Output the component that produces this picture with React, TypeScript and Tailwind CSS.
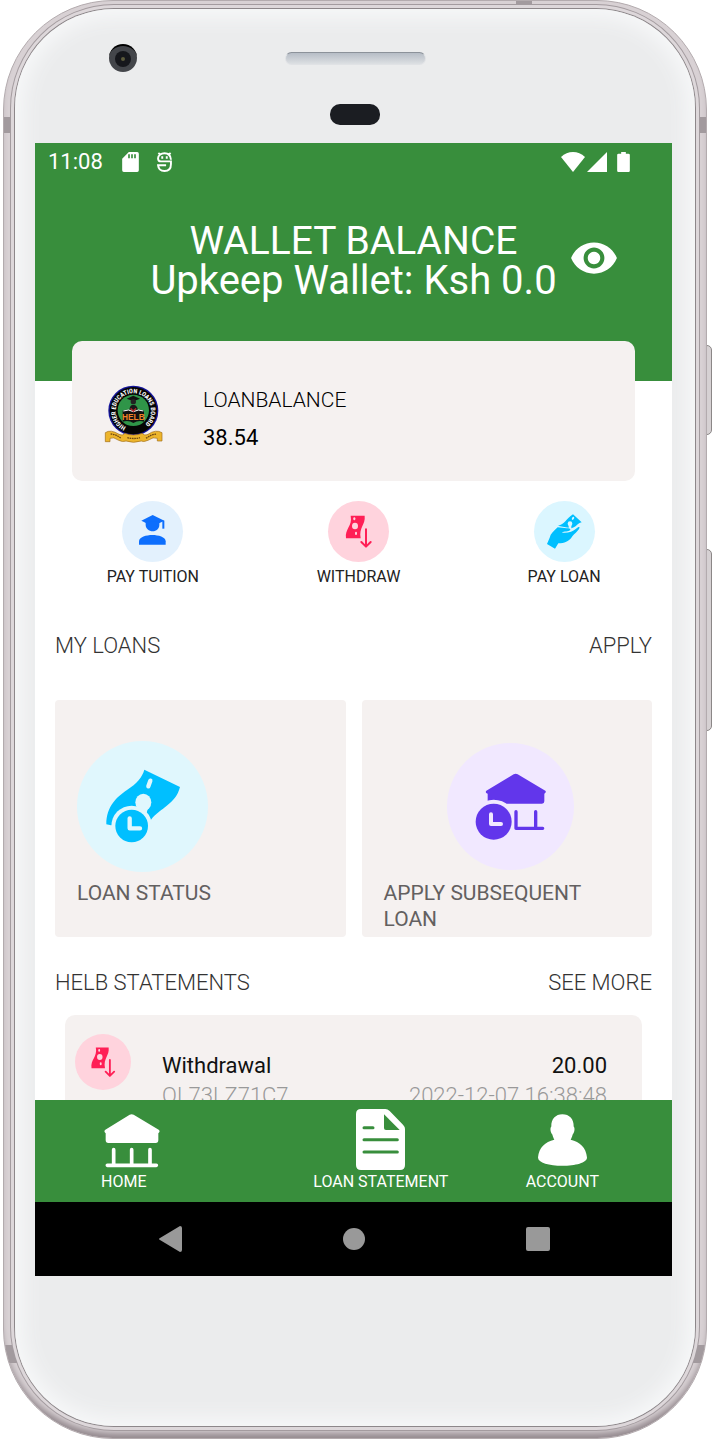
import type { ReactNode } from 'react';
import { MdVisibility } from 'react-icons/md';

function StatusBar() {
  return (
    <div className="flex h-[38px] items-center justify-between pr-[42px] pl-[13px] text-[22px] leading-6">
      <div className="flex items-center">
        <span>11:08</span>
        <svg className="ml-[19px] h-5 w-[17px]" viewBox="0 0 50 60" fill="currentColor">
          <path
            fillRule="evenodd"
            d="M20 0H45Q50 0 50 5V55Q50 60 45 60H5Q0 60 0 55V20ZM18 7V19H23V7ZM27 7V19H32V7ZM36 7V19H41V7Z"
          />
        </svg>
        <svg
          className="ml-[18px] h-5 w-[15px]"
          viewBox="0 0 46 62"
          fill="none"
          stroke="currentColor"
          strokeWidth="6"
        >
          <path d="M4 3L11 9M42 3L35 9M43 24C42 10 34 4 23 4S3 11 3 19Q3 29 12 29H43V37C43 52 34 59 23 59S4 52 3 41H28" />
          <path d="M16 13V21M30 13V21" />
        </svg>
      </div>
      <div className="flex items-center">
        <svg className="h-5 w-6" viewBox="0 0 72 60" fill="currentColor">
          <path d="M36 60L0 15Q16 0 36 0T72 15Z" />
        </svg>
        <svg className="ml-[2px] h-5 w-5" viewBox="0 0 60 60" fill="currentColor">
          <path d="M60 0V60H0Z" />
        </svg>
        <svg className="ml-[10px] h-5 w-[13px]" viewBox="0 0 38 60" fill="currentColor">
          <path d="M12 0H26V5H34Q38 5 38 9V56Q38 60 34 60H4Q0 60 0 56V9Q0 5 4 5H12Z" />
        </svg>
      </div>
    </div>
  );
}

function HelbLogo() {
  return (
    <svg className="mt-2 h-[60px] w-[59px]" viewBox="0 0 177 180" role="img" aria-label="HELB">
      <defs>
        <path id="ring" d="M66 126A53 53 0 1 1 110 126" />
      </defs>
      <circle cx="88" cy="77" r="75" fill="#14149a" />
      <circle cx="88" cy="77" r="71" fill="#050505" />
      <circle cx="88" cy="76" r="47" fill="#2f9548" />
      <text
        fill="#ffffff"
        fontSize="19"
        fontWeight="700"
        fontFamily="'Liberation Sans Narrow', 'Roboto Condensed', 'Liberation Sans', sans-serif"
      >
        <textPath href="#ring">HIGHER EDUCATION LOANS BOARD</textPath>
      </text>
      <path d="M68 41L88 32L108 41L88 49Z" fill="#111" />
      <circle cx="88" cy="50" r="8" fill="#222" />
      <path d="M76 74Q78 58 88 60Q98 58 102 74Z" fill="#181818" />
      <path d="M56 77Q74 70 88 79Q104 70 120 77V110Q104 104 88 114Q74 104 56 110Z" fill="#111" />
      <path d="M58 78Q74 71 88 80Q104 71 118 78" fill="none" stroke="#fff" strokeWidth="3" />
      <path d="M80 70L88 79L96 70" fill="none" stroke="#c8232c" strokeWidth="4" />
      <text
        x="88"
        y="106"
        fill="#f0832a"
        fontSize="25"
        fontWeight="700"
        textAnchor="middle"
        fontFamily="'Liberation Sans', sans-serif"
      >
        HELB
      </text>
      <path
        d="M4 143Q20 132 45 148Q58 153 62 145Q88 155 115 145Q120 153 132 148Q155 132 174 143V168H160V160Q148 154 132 166Q118 172 112 168Q88 176 66 168Q56 172 44 166Q28 154 18 160V170H4Z"
        fill="#edb52c"
        stroke="#a06c18"
        strokeWidth="2"
      />
      <path
        d="M20 147Q36 148 52 160M70 158Q88 163 108 158M126 160Q142 148 158 147"
        fill="none"
        stroke="#6e4812"
        strokeWidth="4"
        strokeDasharray="5 2"
      />
    </svg>
  );
}

function TuitionIcon() {
  return (
    <svg className="h-full w-full" viewBox="0 0 183 183" fill="#0d6efd">
      <path d="M58 59L92 42L127 59L92 76Z" />
      <path d="M71 62V72C71 83 81 91 92 91S112 83 112 72V62Z" />
      <path d="M121 59H127V83H121Z" />
      <path d="M51 131V121C51 108 73 102 91 102S131 108 131 121V131Z" />
    </svg>
  );
}

function WithdrawIcon() {
  return (
    <svg className="h-full w-full" viewBox="0 0 183 183">
      <path d="M68 44H110C113 72 92 78 98 112H54C50 82 74 76 68 44Z" fill="#ff1f56" />
      <g fill="#ffd3dd">
        <ellipse cx="81" cy="75" rx="9" ry="10" />
        <rect x="76" y="49" width="6" height="9" rx="3" />
        <rect x="81" y="92" width="6" height="10" rx="3" />
      </g>
      <path
        d="M114 85V136M100 123L114 137L128 123"
        fill="none"
        stroke="#ff1f56"
        strokeWidth="6"
        strokeLinecap="round"
        strokeLinejoin="round"
      />
    </svg>
  );
}

function PayLoanIcon() {
  return (
    <svg className="h-full w-full" viewBox="0 0 183 183">
      <path d="M72 74C92 70 96 54 117 40L143 64C128 68 130 77 112 82L78 76Z" fill="#00bfff" />
      <g fill="#dbf6ff">
        <circle cx="108" cy="68" r="7" />
        <rect x="104" y="72" width="8" height="14" />
        <ellipse cx="117" cy="52" rx="3" ry="5" transform="rotate(30 117 52)" />
      </g>
      <path
        d="M39 129L63 143L73 127C92 127 104 120 112 110C118 101 132 91 136 82C138 76 133 78 128 82C116 93 100 97 83 95C90 90 104 93 109 87C110 83 104 82 98 82L71 79C58 91 50 98 47 110Z"
        fill="#00bfff"
      />
    </svg>
  );
}

function LoanStatusIcon() {
  return (
    <svg className="h-full w-full" viewBox="0 0 393 393">
      <path
        d="M202 86L309 138C296 190 250 200 222 236L164 255L102 253L88 250C88 195 120 168 150 147C180 127 196 108 202 86Z"
        fill="#00bfff"
      />
      <g fill="#e0f7fd">
        <circle cx="164" cy="255" r="61" />
        <ellipse cx="199" cy="184" rx="24" ry="26" />
        <path d="M182 198H214L208 218H185Z" />
      </g>
      <circle cx="164" cy="255" r="49" fill="#00bfff" />
      <path
        d="M220 119L214 136M158 232V262H189"
        fill="none"
        stroke="#e0f7fd"
        strokeWidth="13"
        strokeLinecap="round"
        strokeLinejoin="round"
      />
    </svg>
  );
}

function ApplyLoanIcon() {
  return (
    <svg className="h-full w-full" viewBox="0 0 381 381">
      <path
        d="M200 94Q206 91 212 94L295 143Q299 148 292 152V175Q292 182 285 182H122V152Q113 149 118 143Z"
        fill="#6236eb"
      />
      <circle cx="140" cy="236" r="66" fill="#f1e8ff" />
      <path
        d="M207 206V256M266 206V256M207 256H287"
        fill="none"
        stroke="#6236eb"
        strokeWidth="10"
        strokeLinecap="round"
      />
      <circle cx="140" cy="236" r="54" fill="#6236eb" />
      <path
        d="M132 214V243H162"
        fill="none"
        stroke="#f1e8ff"
        strokeWidth="12"
        strokeLinecap="round"
        strokeLinejoin="round"
      />
    </svg>
  );
}

function HomeIcon() {
  return (
    <svg className="ml-[3px] h-[54px] w-14" viewBox="0 0 168 162" fill="currentColor">
      <path d="M77 2Q83 -1 89 2L164 47Q170 52 163 58V78Q163 87 155 87H13Q5 87 5 78V58Q-2 52 4 47Z" />
      <path
        d="M29 107V152M83 107V152M138 107V152M10 154H157"
        stroke="currentColor"
        strokeWidth="11"
        strokeLinecap="round"
      />
    </svg>
  );
}

function DocumentIcon() {
  return (
    <svg className="h-[61px] w-[49px]" viewBox="0 0 147 183">
      <path
        d="M15 0H88Q95 0 101 6L141 47Q147 53 147 60V168Q147 183 132 183H15Q0 183 0 168V15Q0 0 15 0Z"
        fill="#fff"
      />
      <path d="M84 16L131 63H90Q84 63 84 57Z" fill="#388e3c" />
      <path
        d="M24 56H51M24 92H124M24 129H124"
        stroke="#388e3c"
        strokeWidth="9"
        strokeLinecap="round"
      />
    </svg>
  );
}

function AccountIcon() {
  return (
    <svg className="h-[52px] w-[49px]" viewBox="0 0 147 155" fill="currentColor">
      <path d="M73 0C94 0 108 14 107 37C112 43 109 56 104 61C102 68 100 73 98 77C126 83 144 101 147 130C147 146 112 155 73 155S0 146 0 130C3 101 21 83 49 77C47 73 45 68 43 61C38 56 35 43 40 37C39 14 53 0 73 0Z" />
    </svg>
  );
}

function Header() {
  return (
    <header className="h-[238px] shrink-0 bg-[#388e3c] text-white">
      <StatusBar />
      <div className="mt-10 grid grid-cols-[1fr_auto_1fr] items-start gap-3">
        <div className="col-start-2 text-center text-[40px] leading-10 whitespace-nowrap">
          <h1 className="text-[39px]">WALLET BALANCE</h1>
          <p>Upkeep Wallet: Ksh 0.0</p>
        </div>
        <button type="button" aria-label="Show balance" className="w-fit pt-3">
          <MdVisibility className="h-[50px] w-[50px]" />
        </button>
      </div>
    </header>
  );
}

function BalanceCard() {
  return (
    <section className="relative mx-[37px] -mt-10 flex h-[140px] shrink-0 items-center gap-10 rounded-[10px] bg-[#f5f1f0] px-8">
      <HelbLogo />
      <div className="mt-4 leading-6 text-black">
        <h2 className="text-[21px] font-light">LOANBALANCE</h2>
        <p className="mt-[14px] text-[22px]">38.54</p>
      </div>
    </section>
  );
}

function QuickAction({
  label,
  color,
  children,
}: {
  label: string;
  color: string;
  children: ReactNode;
}) {
  return (
    <button
      type="button"
      className="flex flex-col items-center gap-1 text-base leading-[22px] text-[#222]"
    >
      <span className={`block h-[61px] w-[61px] rounded-full ${color}`}>{children}</span>
      {label}
    </button>
  );
}

function SectionHeader({ title, action }: { title: string; action: string }) {
  return (
    <div className="flex shrink-0 items-center justify-between px-5 text-[22px] leading-[26px] font-light text-[#333]">
      <h2>{title}</h2>
      <a href="#">{action}</a>
    </div>
  );
}

function LoanCard({
  label,
  align,
  children,
}: {
  label: string;
  align: string;
  children: ReactNode;
}) {
  return (
    <button
      type="button"
      className="flex h-[237px] flex-col justify-start overflow-hidden rounded-sm bg-[#f5f1f0] pt-[41px] pr-[14px] pl-[22px] text-left text-[21px] leading-[26px] text-[#636060]"
    >
      <span className={`flex h-[131px] items-center ${align}`}>{children}</span>
      <span className="mt-2">{label}</span>
    </button>
  );
}

function StatementRow({
  title,
  amount,
  reference,
  date,
}: {
  title: string;
  amount: string;
  reference: string;
  date: string;
}) {
  return (
    <div className="mx-[30px] mt-[19px] flex shrink-0 gap-[31px] rounded-[10px] bg-[#f5f1f0] pr-[35px] pb-5 pl-[10px]">
      <div className="mt-[19px] h-14 w-14 shrink-0 rounded-full bg-[#ffd3dd]">
        <WithdrawIcon />
      </div>
      <div className="mt-9 flex-1 text-[22px] leading-[30px]">
        <div className="flex justify-between text-[#111]">
          <span>{title}</span>
          <span>{amount}</span>
        </div>
        <div className="flex justify-between font-light text-[#999]">
          <span>{reference}</span>
          <span>{date}</span>
        </div>
      </div>
    </div>
  );
}

function BottomNav() {
  return (
    <nav className="grid h-[102px] shrink-0 grid-cols-3 bg-[#388e3c] text-base leading-6 text-white">
      <a href="#" className="ml-[66px] flex w-fit flex-col pt-[14px]">
        <HomeIcon />
        <span className="mt-[2px]">HOME</span>
      </a>
      <a href="#" className="ml-[66px] flex w-fit flex-col items-center pt-[9px] whitespace-nowrap">
        <DocumentIcon />
        <span>LOAN STATEMENT</span>
      </a>
      <a href="#" className="ml-[66px] flex w-fit flex-col items-center pt-[14px]">
        <AccountIcon />
        <span className="mt-1">ACCOUNT</span>
      </a>
    </nav>
  );
}

function SystemNav() {
  return (
    <div className="flex h-[74px] shrink-0 items-center justify-center gap-40 bg-black">
      <button type="button" aria-label="Back">
        <svg className="h-[26px] w-6" viewBox="0 0 24 26" fill="#999">
          <path d="M22 0Q24 0 24 2V24Q24 26 22 26L2 14Q0 13 2 12Z" />
        </svg>
      </button>
      <button type="button" aria-label="Home" className="h-6 w-6 p-px">
        <span className="block h-full w-full rounded-full bg-[#999]" />
      </button>
      <button type="button" aria-label="Recents" className="h-6 w-6 rounded-xs bg-[#999]" />
    </div>
  );
}

function Screen() {
  return (
    <div className="mr-[23px] ml-5 flex min-h-0 flex-1 flex-col bg-white">
      <main className="flex min-h-0 flex-1 flex-col overflow-hidden">
        <Header />
        <BalanceCard />

        <div className="mt-5 mr-[5px] ml-[15px] grid shrink-0 grid-cols-3">
          <QuickAction label="PAY TUITION" color="bg-[#e3f1fd]">
            <TuitionIcon />
          </QuickAction>
          <QuickAction label="WITHDRAW" color="bg-[#ffd3dd]">
            <WithdrawIcon />
          </QuickAction>
          <QuickAction label="PAY LOAN" color="bg-[#dbf6ff]">
            <PayLoanIcon />
          </QuickAction>
        </div>

        <div className="mt-[45px] flex shrink-0 flex-col">
          <SectionHeader title="MY LOANS" action="APPLY" />
          <div className="mt-[41px] grid grid-cols-2 gap-4 px-5">
            <LoanCard label="LOAN STATUS" align="justify-start">
              <span className="block h-[131px] w-[131px] rounded-full bg-[#e0f7fd]">
                <LoanStatusIcon />
              </span>
            </LoanCard>
            <LoanCard label="APPLY SUBSEQUENT LOAN" align="justify-center">
              <span className="block h-[127px] w-[127px] rounded-full bg-[#f1e8ff]">
                <ApplyLoanIcon />
              </span>
            </LoanCard>
          </div>
        </div>

        <div className="mt-[33px] flex shrink-0 flex-col">
          <SectionHeader title="HELB STATEMENTS" action="SEE MORE" />
          <StatementRow
            title="Withdrawal"
            amount="20.00"
            reference="QL73LZ71C7"
            date="2022-12-07 16:38:48"
          />
        </div>
      </main>
      <BottomNav />
      <SystemNav />
    </div>
  );
}

function Bezel() {
  return (
    <div className="flex h-[134px] shrink-0 flex-col items-center pt-[35px]">
      <div className="grid w-full grid-cols-[1fr_141px_1fr] items-center">
        <div className="ml-[94px] flex h-7 w-7 items-center justify-center rounded-full border-t-2 border-black bg-[#44464b]">
          <div className="flex h-4 w-4 items-center justify-center rounded-full bg-[#16171c]">
            <div className="h-1 w-1 rounded-full bg-[#5c5a3c]" />
          </div>
        </div>
        <div className="h-[13px] rounded-full border border-[#e0e2e5] border-t-[#8c929a] bg-linear-to-b from-[#b6bdc6] to-[#dde0e3]" />
      </div>
      <div className="mt-8 h-[21px] w-[50px] rounded-[10px] bg-[#1b1d22]" />
    </div>
  );
}

// White handset shell: metal rim, antenna bands and side buttons around the face
function Phone({ children }: { children: ReactNode }) {
  return (
    <div className="relative flex h-full flex-col">
      <div className="absolute top-[345px] -right-[5px] h-[90px] w-[10px] rounded-md border border-[#8b8787] bg-[#d6d1d3]" />
      <div className="absolute top-[549px] -right-[5px] h-[182px] w-[10px] rounded-md border border-[#8b8787] bg-[#d6d1d3]" />
      <div className="relative flex min-h-0 flex-1 flex-col overflow-hidden rounded-[110px] border border-[#b3abae] bg-[#d8d1d4] px-[11px] pt-2 pb-3 shadow-[inset_0_-8px_6px_-3px_#948a8f]">
        <div className="absolute top-0 left-[512px] h-2 w-4 bg-[#a29a9e]" />
        <div className="absolute inset-x-0 top-[116px] h-4 bg-[#a29a9e]" />
        <div className="absolute inset-x-0 bottom-[75px] h-[18px] bg-[#a29a9e]" />
        <div className="relative flex min-h-0 flex-1 flex-col rounded-[99px] bg-[#ebeced] pb-[150px] shadow-[0_0_0_1px_#8d878a,0_0_0_4px_#ddd7da,0_0_0_5px_#a39b9f,inset_0_0_20px_8px_#f7f8f9]">
          {children}
        </div>
      </div>
    </div>
  );
}

export default function App() {
  return (
    <div className="h-screen bg-white pr-[5px] pb-px pl-[3px] font-['Roboto',sans-serif]">
      <Phone>
        <Bezel />
        <Screen />
      </Phone>
    </div>
  );
}
